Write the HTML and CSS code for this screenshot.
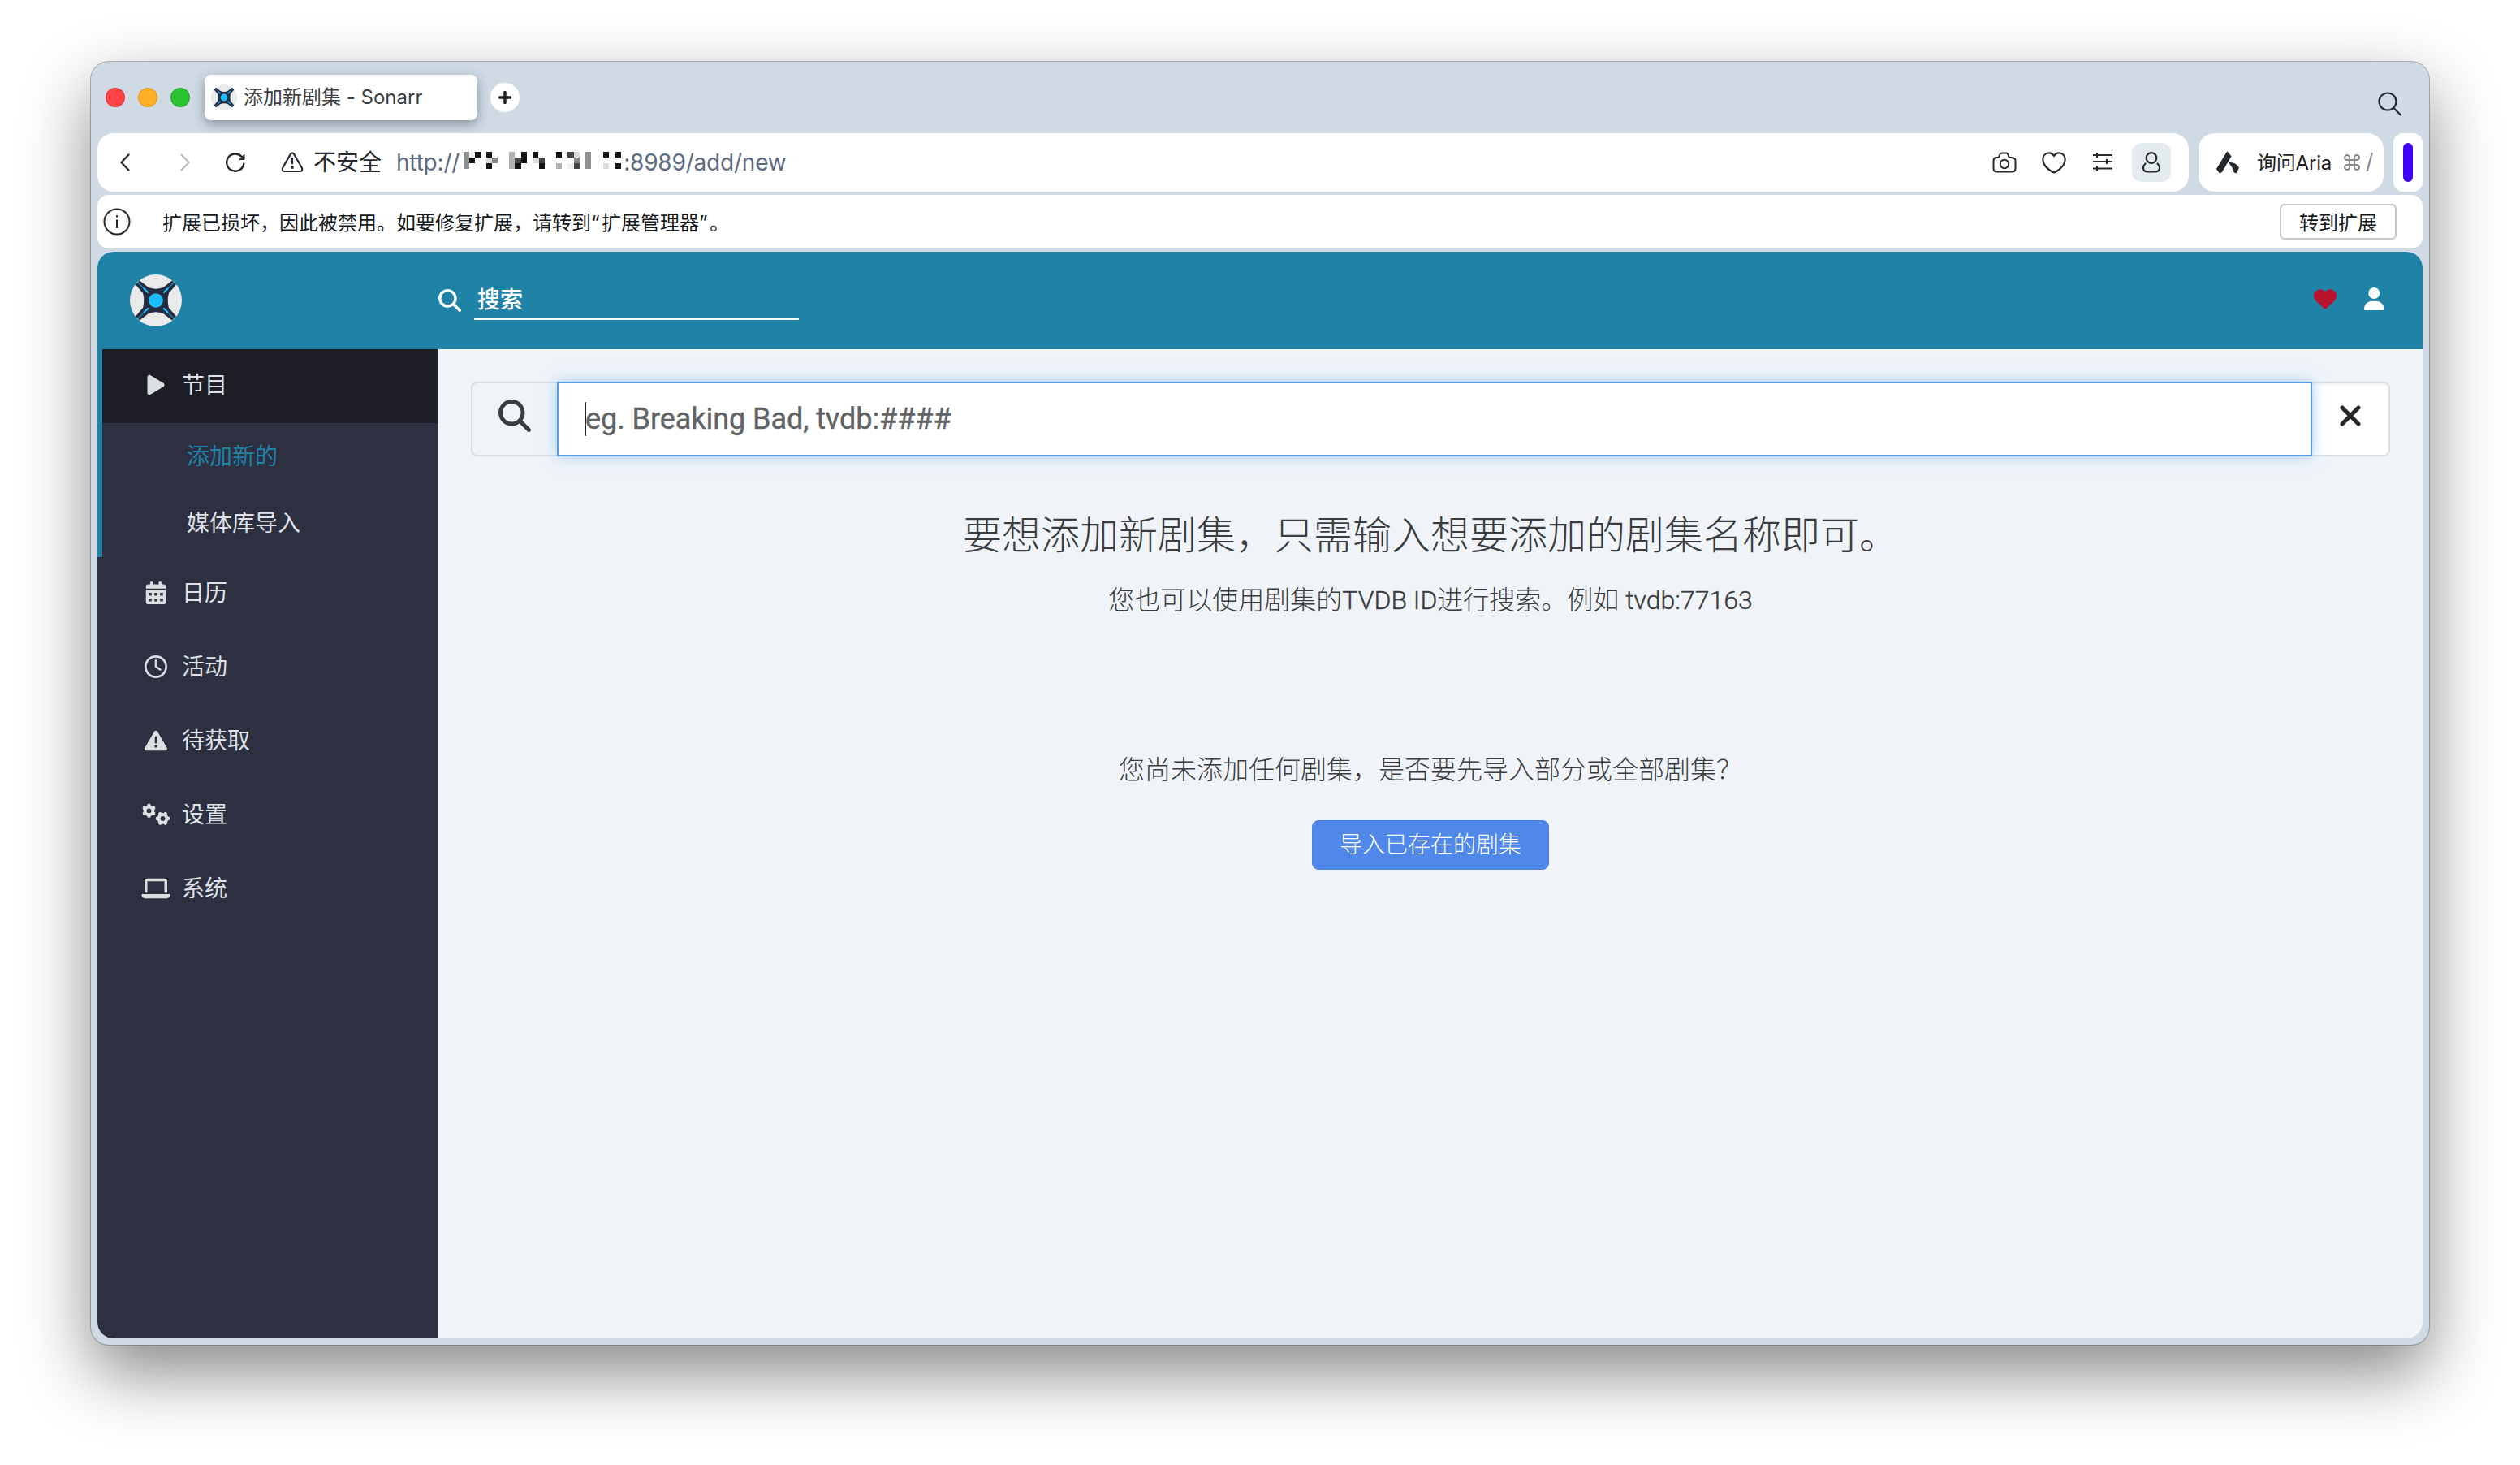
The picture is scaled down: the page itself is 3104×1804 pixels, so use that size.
FILE: index.html
```html
<!DOCTYPE html>
<html lang="zh-CN">
<head>
<meta charset="utf-8">
<title>添加新剧集 - Sonarr</title>
<link rel="stylesheet" href="styles.css">
</head>
<body>
<svg class="defs" width="0" height="0">
  <symbol id="sonarr" viewBox="0 0 64 64">
    <circle cx="32" cy="32" r="32" fill="#e9eaea"/>
    <path d="M12 7.500L23 16Q32 19.500 41 16L52 7.500L57 12.500L48 23Q45.500 32 48 41L57 51.500L52 56.500L41 48Q32 44.500 23 48L12 56.500L7 51.500L16 41Q18.500 32 16 23L7 12.500Z" fill="#252b40"/>
    <path d="M10 10L22.500 22.500M54 10L41.500 22.500M10 54L22.500 41.500M54 54L41.500 41.500" stroke="#1b8fd0" stroke-width="1.200"/>
    <path d="M17 17L22.500 22.500M47 17L41.500 22.500M17 47L22.500 41.500M47 47L41.500 41.500" stroke="#1bbcfb" stroke-width="2.400"/>
    <circle cx="32" cy="32" r="8.800" fill="#18c0ff"/>
  </symbol>
  <symbol id="search" viewBox="0 0 512 512"><path fill="currentColor" d="M416 208c0 45.900-14.900 88.300-40 122.700L502.600 457.400c12.500 12.500 12.500 32.800 0 45.300s-32.800 12.500-45.300 0L330.700 376c-34.400 25.200-76.800 40-122.700 40C93.100 416 0 322.900 0 208S93.100 0 208 0S416 93.100 416 208zM208 352a144 144 0 1 0 0-288 144 144 0 1 0 0 288z"/></symbol>
</svg>
<div class="window">
  <header class="tabs">
    <div class="lights"><i class="red"></i><i class="amber"></i><i class="green"></i></div>
    <div class="tab"><svg width="32" height="32"><use href="#sonarr"/></svg><span>添加新剧集 - Sonarr</span></div>
    <div class="new-tab"><svg width="16" height="16" viewBox="0 0 16 16"><path d="M8 1.500V14.500M1.500 8H14.500" stroke="#1b1e22" stroke-width="3.400" stroke-linecap="round"/></svg></div>
    <svg class="tab-search" width="30" height="30" viewBox="0 0 30 30" fill="none" stroke="#24292f" stroke-width="2.200" stroke-linecap="round"><circle cx="12" cy="12" r="10.500"/><path d="M19.500 20L28 28.500"/></svg>
  </header>
  <div class="toolbar">
    <div class="address">
      <svg class="back" width="12" height="22" viewBox="0 0 12 22" fill="none" stroke="#24292f" stroke-width="2.400" stroke-linecap="round" stroke-linejoin="round"><path d="M10.500 1.500L1.500 11L10.500 20.500"/></svg>
      <svg class="forward" width="12" height="22" viewBox="0 0 12 22" fill="none" stroke="#b5b8ba" stroke-width="2" stroke-linecap="round" stroke-linejoin="round"><path d="M1.500 1.500L10.500 11L1.500 20.500"/></svg>
      <svg class="reload" width="26" height="26" viewBox="0 0 26 26" fill="none" stroke="#24292f" stroke-width="2.400" stroke-linecap="round"><path d="M23.300 14.500A10.600 10.600 0 1 1 20.500 5.800L23 8.500"/><path d="M24 3.500V9.500H18Z" fill="#24292f" stroke-width="1" stroke-linejoin="round"/></svg>
      <svg class="warn" width="28" height="26" viewBox="0 0 28 26" fill="none" stroke="#24292f" stroke-width="2.200" stroke-linecap="round" stroke-linejoin="round"><path d="M12 2.500Q14 .2 16 2.500L26 20Q27 24 23.500 24H4.500Q1 24 2 20Z"/><path d="M14 8V14.500"/><circle cx="14" cy="19" r=".8" fill="#24292f"/></svg>
      <span class="insecure">不安全</span>
      <span class="url">http://</span>
      <svg class="mosaic" width="196" height="21" viewBox="0 0 196 21" shape-rendering="crispEdges">
        <path fill="#8f9090" d="M0 0h7v21h-7zM150 0h7v21h-7z"/>
        <path fill="#b0b1b1" d="M56 0h7v21h-7zM114 14h7v7h-7z"/>
        <path fill="#121416" d="M7 7h7v7h-7zM14 0h7v7h-7zM28 0h7v7h-7zM28 14h7v7h-7zM63 14h8v7h-8zM71 0h7v14h-7zM85 0h7v7h-7zM93 14h7v7h-7zM114 0h7v7h-7zM172 0h7v7h-7zM187 0h7v7h-7zM187 14h7v7h-7z"/>
        <path fill="#414345" d="M63 7h8v7h-8zM93 7h7v7h-7zM128 0h8v7h-8zM136 14h7v7h-7z"/>
        <path fill="#858686" d="M35 7h7v7h-7zM136 7h7v7h-7z"/>
        <path fill="#dcdddd" d="M28 7h7v7h-7zM85 7h8v7h-8zM136 0h7v7h-7zM172 14h7v7h-7z"/>
        <path fill="#f0f0f0" d="M7 0h7v7h-7zM128 14h8v7h-8z"/>
      </svg>
      <span class="url rest">:8989/add/new</span>
      <div class="tools">
        <svg width="30" height="30" viewBox="0 0 30 30" fill="none" stroke="#24292f" stroke-width="2" stroke-linejoin="round"><path d="M1.500 22.500V13Q1.500 9 5.500 9H6.500Q8 9 8.500 7.500L9.200 5.500Q10 3.500 12 3.500H17Q19 3.500 19.500 5.500L20 7Q20.500 9 22.500 9Q28.500 9 28.500 12.500V22.500Q28.500 26.500 24.500 26.500H5.500Q1.500 26.500 1.500 22.500Z"/><circle cx="15" cy="17" r="5.200"/></svg>
        <svg width="30" height="30" viewBox="0 0 30 30" fill="none" stroke="#24292f" stroke-width="2.200" stroke-linejoin="round"><path d="M15 7Q12 2.500 7.500 3.500C2.500 4.500 1 9 1.500 13C2.200 19 8.500 24 13 26.700Q15 28 17 26.700C21.500 24 27.800 19 28.500 13C29 9 27.500 4.500 22.500 3.500Q18 2.500 15 7Z"/></svg>
        <svg width="30" height="30" viewBox="0 0 30 30" fill="none" stroke="#24292f" stroke-width="2.200"><path d="M3 6H27M3 14H27M3 22.500H27M8 3V9M20 11V17M8 19.500V25.500"/></svg>
        <div class="profile"><svg width="30" height="30" viewBox="0 0 30 30" fill="none" stroke="#24292f" stroke-width="2.200" stroke-linecap="round"><circle cx="15" cy="9.500" r="6.300"/><path d="M7.500 16.500Q5 19 5 22Q5 26.500 11 26.500H19Q25 26.500 25 22Q25 19 22.500 16.500"/></svg></div>
      </div>
    </div>
    <div class="aria">
      <svg width="30" height="28" viewBox="0 0 30 28" fill="#24292f" stroke="#24292f" stroke-linejoin="round"><path d="M14.500 .8L19 6.500L7.500 26L5 27L1.500 22Z"/><path d="M16.500 14.500Q25 14 28.500 20.500L25.500 27L23 26Q22 20 16.500 14.500Z"/></svg>
      <span>询问Aria</span><svg class="cmd" width="20" height="20" viewBox="0 0 20 20" fill="none" stroke="#85888a" stroke-width="1.900"><path d="M7 7V4A3 3 0 1 0 4 7H16A3 3 0 1 0 13 4V16A3 3 0 1 0 16 13H4A3 3 0 1 0 7 16Z"/></svg><span class="slash">/</span>
    </div>
    <div class="side"><i></i></div>
  </div>
  <div class="notice">
    <svg width="34" height="34" viewBox="0 0 34 34" fill="none" stroke="#24292f" stroke-width="2"><circle cx="17" cy="17" r="15.500"/><path d="M17 14.500V25"/><path d="M17 9V11.500"/></svg>
    <span class="message">扩展已损坏，因此被禁用。如要修复扩展，请转到<span class="quote">“</span>扩展管理器<span class="quote">”</span>。</span>
    <button>转到扩展</button>
  </div>
  <div class="page">
    <div class="topbar">
      <svg class="logo" width="64" height="64"><use href="#sonarr"/></svg>
      <svg class="glass" width="28" height="28"><use href="#search"/></svg>
      <div class="field">搜索</div>
      <svg class="heart" width="28" height="28" viewBox="0 0 512 512"><path fill="#b9122f" d="M47.600 300.400L228.300 469.100c7.500 7 17.400 10.900 27.700 10.900s20.200-3.900 27.700-10.900L464.400 300.400c30.400-28.300 47.600-68 47.600-109.500v-5.800c0-69.900-50.500-129.500-119.400-141C347 36.500 300.600 51.400 268 84L256 96 244 84c-32.600-32.600-79-47.500-124.600-39.900C50.500 55.600 0 115.200 0 185.100v5.800c0 41.500 17.200 81.200 47.600 109.500z"/></svg>
      <svg class="user" width="24.500" height="28" viewBox="0 0 448 512"><path fill="#fff" d="M224 256a128 128 0 1 0 0-256 128 128 0 1 0 0 256zm-45.700 48C79.800 304 0 383.800 0 482.300C0 498.700 13.300 512 29.700 512H418.300c16.400 0 29.700-13.300 29.700-29.700C448 383.800 368.200 304 269.700 304H178.300z"/></svg>
    </div>
    <div class="body">
      <nav>
        <div class="group">
          <a class="item active"><svg width="21" height="28" viewBox="0 0 384 512"><path fill="currentColor" d="M73 39c-14.800-9.100-33.400-9.400-48.500-.9S0 62.600 0 80V432c0 17.400 9.400 33.400 24.500 41.900s33.700 8.100 48.500-.9L361 297c14.300-8.700 23-24.200 23-41s-8.700-32.200-23-41L73 39z"/></svg><span>节目</span></a>
          <a class="sub current">添加新的</a>
          <a class="sub">媒体库导入</a>
        </div>
        <a class="item"><svg width="24.500" height="28" viewBox="0 0 448 512"><path fill="currentColor" fill-rule="evenodd" d="M128 0c17.700 0 32 14.300 32 32V64H288V32c0-17.700 14.300-32 32-32s32 14.300 32 32V64h48c26.500 0 48 21.500 48 48v48H0V112C0 85.500 21.500 64 48 64H96V32c0-17.700 14.300-32 32-32zM0 192H448V464c0 26.500-21.500 48-48 48H48c-26.500 0-48-21.500-48-48V192zM64 256v64h64v-64zM192 256v64h64v-64zM320 256v64h64v-64zM64 384v64h64v-64zM192 384v64h64v-64zM320 384v64h64v-64z"/></svg><span>日历</span></a>
        <a class="item"><svg width="28" height="28" viewBox="0 0 512 512"><path fill="currentColor" d="M464 256A208 208 0 1 1 48 256a208 208 0 1 1 416 0zM0 256a256 256 0 1 0 512 0A256 256 0 1 0 0 256zM232 120V256c0 8 4 15.500 10.700 20l96 64c11 7.400 25.900 4.400 33.300-6.700s4.400-25.900-6.700-33.300L280 243.200V120c0-13.300-10.700-24-24-24s-24 10.700-24 24z"/></svg><span>活动</span></a>
        <a class="item"><svg width="28" height="28" viewBox="0 0 512 512"><path fill="currentColor" d="M256 32c14.200 0 27.300 7.500 34.500 19.800l216 368c7.300 12.400 7.300 27.700 .2 40.100S486.300 480 472 480H40c-14.300 0-27.600-7.700-34.700-20.100s-7-27.800 .2-40.100l216-368C228.700 39.500 241.800 32 256 32zm0 128c-13.300 0-24 10.700-24 24V296c0 13.300 10.700 24 24 24s24-10.700 24-24V184c0-13.300-10.700-24-24-24zm32 224a32 32 0 1 0 -64 0 32 32 0 1 0 64 0z"/></svg><span>待获取</span></a>
        <a class="item"><svg width="36" height="28" viewBox="-18 -14 36 28" fill="none" stroke="currentColor"><g transform="translate(-8.500 -4.700)"><circle r="4.900" stroke-width="4"/><path stroke-width="4.600" stroke-linecap="round" d="M0-6.300V-6.500M5.400-3.100L5.600-3.200M5.400 3.100L5.600 3.200M0 6.300V6.500M-5.400 3.100L-5.600 3.200M-5.400-3.100L-5.600-3.200"/></g><g transform="translate(8.500 4.900) rotate(90)"><circle r="4.900" stroke-width="4"/><path stroke-width="4.600" stroke-linecap="round" d="M0-6.300V-6.500M5.400-3.100L5.600-3.200M5.400 3.100L5.600 3.200M0 6.300V6.500M-5.400 3.100L-5.600 3.200M-5.400-3.100L-5.600-3.200"/></g></svg><span>设置</span></a>
        <a class="item"><svg width="35" height="28" viewBox="0 0 640 512"><path fill="currentColor" d="M128 32C92.700 32 64 60.700 64 96V352h64V96H512V352h64V96c0-35.300-28.700-64-64-64H128zM19.200 384C8.600 384 0 392.600 0 403.200C0 445.600 34.400 480 76.800 480H563.200c42.400 0 76.800-34.400 76.800-76.800c0-10.600-8.600-19.200-19.200-19.200H19.200z"/></svg><span>系统</span></a>
      </nav>
      <main>
        <div class="lookup">
          <div class="addon"><svg width="40" height="40"><use href="#search"/></svg></div>
          <div class="input"><i class="caret"></i><span>eg. Breaking Bad, tvdb:####</span></div>
          <div class="clear"><svg width="28" height="28" viewBox="0 0 28 28"><path d="M4 4L24 24M24 4L4 24" stroke="#26282a" stroke-width="5" stroke-linecap="round"/></svg></div>
        </div>
        <h1>要想添加新剧集，只需输入想要添加的剧集名称即可。</h1>
        <p class="hint">您也可以使用剧集的<span class="latin">TVDB ID</span>进行搜索。例如 <span class="latin">tvdb:77163</span></p>
        <p class="empty">您尚未添加任何剧集，是否要先导入部分或全部剧集？</p>
        <button class="import">导入已存在的剧集</button>
      </main>
    </div>
  </div>
</div>
</body>
</html>
```
FILE: styles.css
```css
* { box-sizing: border-box; }
body {
  margin: 0;
  padding: 76px 112px;
  height: 1804px;
  background: #fff;
  overflow: hidden;
  font-family: Inter, "Noto Sans CJK SC", sans-serif;
}
svg { display: block; flex: none; }
.defs { position: absolute; }
button { font: inherit; padding: 0; margin: 0; }
i { display: block; }

.window {
  width: 2880px;
  height: 1580px;
  padding: 0 8px 8px;
  border-radius: 22px;
  background: #cfdae5;
  box-shadow: 0 0 0 1px rgba(70, 80, 90, .4), 0 34px 84px rgba(0, 0, 0, .48);
  display: flex;
  flex-direction: column;
}

/* Tab strip */
.tabs { height: 88px; display: flex; align-items: center; padding: 0 25px 0 10px; }
.lights { display: flex; gap: 16px; margin-right: 18px; }
.lights i { width: 24px; height: 24px; border-radius: 50%; border: 1px solid rgba(0, 0, 0, .12); }
.red { background: #fe4447; }
.amber { background: #feb024; }
.green { background: #2ac231; }
.tab {
  width: 336px;
  height: 56px;
  padding-left: 8px;
  border-radius: 8px;
  background: #fff;
  box-shadow: 0 5px 14px rgba(50, 60, 70, .45);
  display: flex;
  align-items: center;
  gap: 8px;
  font-size: 24px;
  line-height: 34px;
  color: #3c3f42;
  white-space: nowrap;
}
.new-tab { width: 36px; height: 36px; margin-left: 16px; border-radius: 50%; background: #fff; display: grid; place-items: center; }
.tab-search { margin-left: auto; margin-top: 16px; }

/* Toolbar */
.toolbar { height: 72px; display: flex; gap: 12px; }
.address, .aria, .side { background: #fff; border-radius: 20px; display: flex; align-items: center; }
.address { flex: 1; padding: 0 22px 0 28px; font-size: 28px; line-height: 40px; }
.back { margin-right: -1px; }
.forward { margin-left: 63px; }
.reload { margin-left: 43px; }
.warn { margin-left: 43px; }
.insecure { margin-left: 12px; color: #24292f; }
.url { margin-left: 18px; color: #5c6b7f; letter-spacing: -.2px; }
.mosaic { margin-left: 5px; margin-top: -5px; }
.url.rest { margin-left: 1px; }
.tools { margin-left: auto; display: flex; align-items: center; gap: 30.500px; }
.profile { width: 48px; height: 48px; margin-left: -9.500px; border-radius: 12px; background: #e4ebee; display: grid; place-items: center; }
.aria { width: 228px; padding-left: 21px; font-size: 24px; color: #1c2024; white-space: nowrap; }
.aria span { margin-left: 21px; margin-top: -3px; letter-spacing: -.2px; }
.cmd { margin-left: 15px; }
.aria .slash { margin-left: 7px; color: #85888a; font-size: 26px; }
.side { width: 36px; border-radius: 12px; justify-content: center; }
.side i { width: 12px; height: 48px; border-radius: 6px; background: #3f00ff; }

.notice {
  height: 66px;
  margin-top: 4px;
  padding: 0 32px 0 7px;
  border-radius: 14px;
  background: #fff;
  display: flex;
  align-items: center;
  font-size: 24px;
  color: #15181b;
}
.message { margin-left: 39px; margin-top: -2px; }
.quote { letter-spacing: 2.500px; }
.notice button { margin-left: auto; width: 144px; height: 44px; padding-bottom: 2px; border: 2px solid #c4c6c8; border-radius: 6px; background: #fff; color: #15181b; }

/* Application */
.page {
  flex: 1;
  margin-top: 4px;
  border-radius: 20px;
  overflow: hidden;
  background: #f0f4f9;
  display: flex;
  flex-direction: column;
  font-family: Roboto, "Noto Sans CJK SC", sans-serif;
}
.topbar { height: 120px; background: #1f82a7; display: flex; align-items: center; padding: 0 48px 0 40px; color: #fff; }
.glass { margin-left: 316px; }
.field { width: 400px; height: 52px; margin: 32px 0 0 16px; padding: 8px 0 0 4px; border-bottom: 2px solid #fff; font-size: 28px; line-height: 40px; align-self: flex-start; font-weight: 500; }
.heart { margin-left: auto; margin-right: 34px; margin-top: -4px; }
.user { margin-top: -4px; }
.body { flex: 1; display: flex; }
nav { width: 420px; background: #2d3041; font-size: 28px; line-height: 40px; color: #dfe1e6; }
.group { border-left: 6px solid #1f82a7; margin-bottom: -1px; }
.item { height: 91px; padding-left: 50px; display: flex; align-items: center; }
.item svg { width: 44px; margin-top: -2px; color: #dcdfe2; }
.item span { margin-left: 10px; }
.group .item { padding-left: 44px; background: #1e1e26; }
.group .item svg { margin-top: -4px; }
.group .item span { margin-top: -1px; }
.sub { height: 82.500px; padding: 1px 0 0 104px; display: flex; align-items: center; }
.current { color: #1f82a7; }

main { flex: 1; padding: 40px; display: flex; flex-direction: column; align-items: center; color: #3a3d40; }
.lookup { width: 100%; height: 92px; display: flex; }
.addon { width: 106px; border: 2px solid #d9e0e4; border-right: 0; border-radius: 8px 0 0 8px; display: grid; place-items: center; padding: 0 0 8px; }
.input {
  flex: 1;
  z-index: 1;
  padding-left: 32px;
  border: 2px solid #5d9cde;
  background: #fff;
  box-shadow: 0 0 16px rgba(102, 175, 233, .6);
  display: flex;
  align-items: center;
  font-size: 36px;
  color: #626466;
}
.input span { letter-spacing: -.05px; -webkit-text-stroke: .4px #626466; }
.caret { width: 2px; height: 42px; margin-right: -1px; background: #26282a; }
.clear { width: 96px; border: 2px solid #d9e0e4; border-left: 0; border-radius: 0 8px 8px 0; background: #fff; display: grid; place-items: center; padding-bottom: 8px; box-shadow: inset 0 2px 3px rgba(0, 0, 0, .06); }
h1, p { margin: 0; font-weight: 300; white-space: nowrap; }
h1 { margin-top: 63px; font-size: 48px; line-height: 70px; }
.hint { margin-top: 21px; font-size: 32px; line-height: 46px; }
.latin { -webkit-text-stroke: .4px #3a3d40; }
.empty { margin-top: 163px; font-size: 32px; line-height: 46px; }
.import { width: 292px; height: 61px; margin-top: 39px; border: 1px solid #4a82dc; border-radius: 8px; background: #4f88e9; color: #fff; font-size: 28px; font-weight: 300; line-height: 40px; }
```
